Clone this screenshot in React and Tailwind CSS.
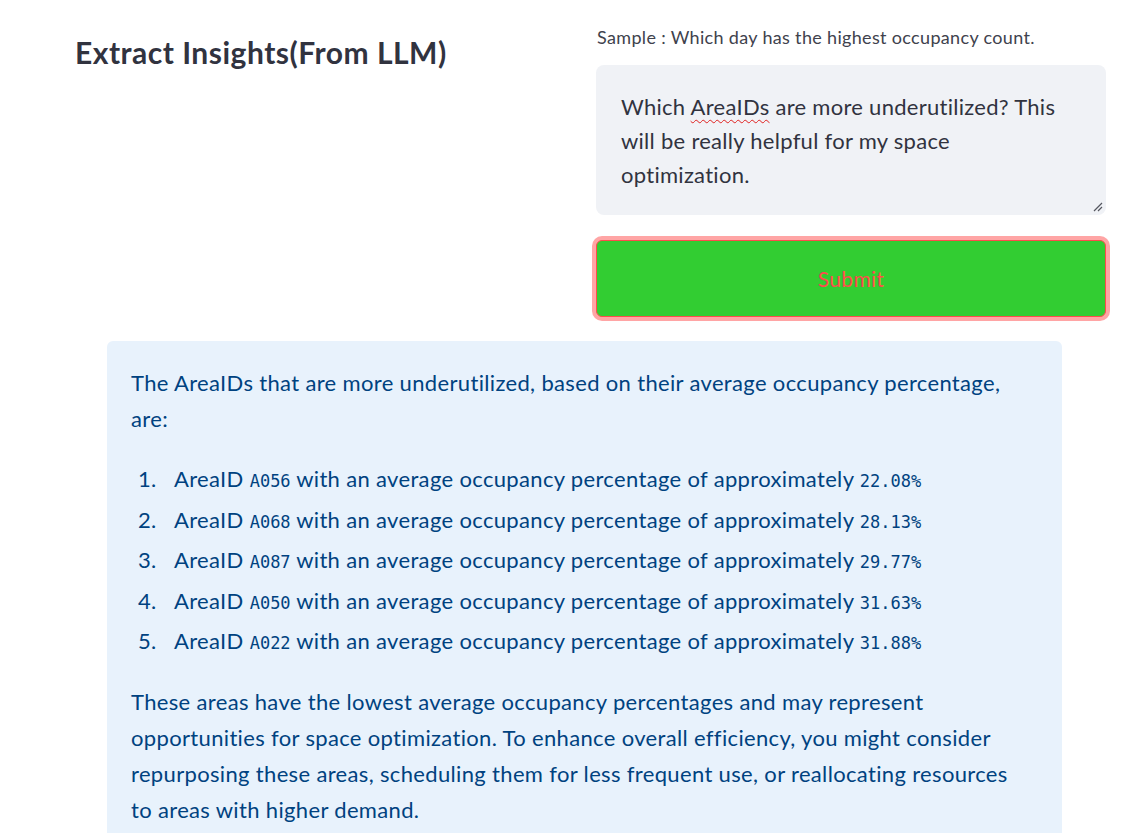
import React from "react";

const rows = [
  { id: "A056", pct: "22.08%" },
  { id: "A068", pct: "28.13%" },
  { id: "A087", pct: "29.77%" },
  { id: "A050", pct: "31.63%" },
  { id: "A022", pct: "31.88%" },
];

const App = () => {
  return (
    <div className="h-[833px] overflow-hidden bg-white font-['Lato',sans-serif]">
      <div className="flex pl-[75px]">
        <div className="w-[521px] pt-[34px]">
          <h1 className="text-[30px] leading-[36px] font-bold text-[#31333f] tracking-[0.5px]">
            Extract Insights(From LLM)
          </h1>
        </div>

        <div className="w-[510px] pt-[24px]">
          <p className="text-[18px] leading-[26px] text-[#40424d] pl-[1px] tracking-[0.33px]">
            Sample : Which day has the highest occupancy count.
          </p>

          <div className="relative mt-[15px] h-[150px] rounded-lg bg-[#f0f2f6] pl-[25px] pr-[40px] pt-[25px]">
            <p className="text-[22px] leading-[34px] text-[#31333f] tracking-[0.28px]">
              Which{" "}
              <span className="underline decoration-wavy decoration-[#e0201f] decoration-1 underline-offset-[4px]">
                AreaIDs
              </span>{" "}
              are more underutilized? This will be really helpful for my space
              optimization.
            </p>
            <svg
              className="absolute right-[3px] bottom-[3px]"
              width="12"
              height="12"
              viewBox="0 0 12 12"
            >
              <path d="M11 3 L3 11 M11 7 L7 11" stroke="#55575f" strokeWidth="1.2" />
            </svg>
          </div>

          <button
            type="button"
            className="mt-[25px] flex h-[77px] w-full items-center justify-center rounded-md border border-[#ff4b4b] bg-[#32cd32] text-[21px] tracking-[0.3px] text-[#ff4b4b] shadow-[0_0_0_4px_rgba(255,75,75,0.5)]"
          >
            Submit
          </button>
        </div>
      </div>

      <div className="ml-[107px] mt-[24px] w-[955px] rounded-t-md bg-[#e8f2fc] pl-6 pr-[54px] pt-[24px] pb-6 text-[22px] leading-[36px] tracking-[0.34px] text-[#004280]">
        <p>
          The AreaIDs that are more underutilized, based on their average
          occupancy percentage, are:
        </p>

        <ol className="mt-[24px] flex flex-col gap-[4.5px]">
          {rows.map((row, i) => (
            <li key={row.id} className="flex h-[36px]">
              <span className="w-[43px] pl-[7px]">{i + 1}.</span>
              <span className="whitespace-nowrap">
                AreaID{" "}
                <code className="font-['DejaVu_Sans_Mono',monospace] text-[17px] leading-none tracking-normal">
                  {row.id}
                </code>{" "}
                with an average occupancy percentage of approximately{" "}
                <code className="font-['DejaVu_Sans_Mono',monospace] text-[17px] leading-none tracking-normal">
                  {row.pct}
                </code>
              </span>
            </li>
          ))}
        </ol>

        <p className="mt-[25px]">
          These areas have the lowest average occupancy percentages and may
          represent opportunities for space optimization. To enhance overall
          efficiency, you might consider repurposing these areas, scheduling
          them for less frequent use, or reallocating resources to areas with
          higher demand.
        </p>
      </div>
    </div>
  );
};

export default App;
